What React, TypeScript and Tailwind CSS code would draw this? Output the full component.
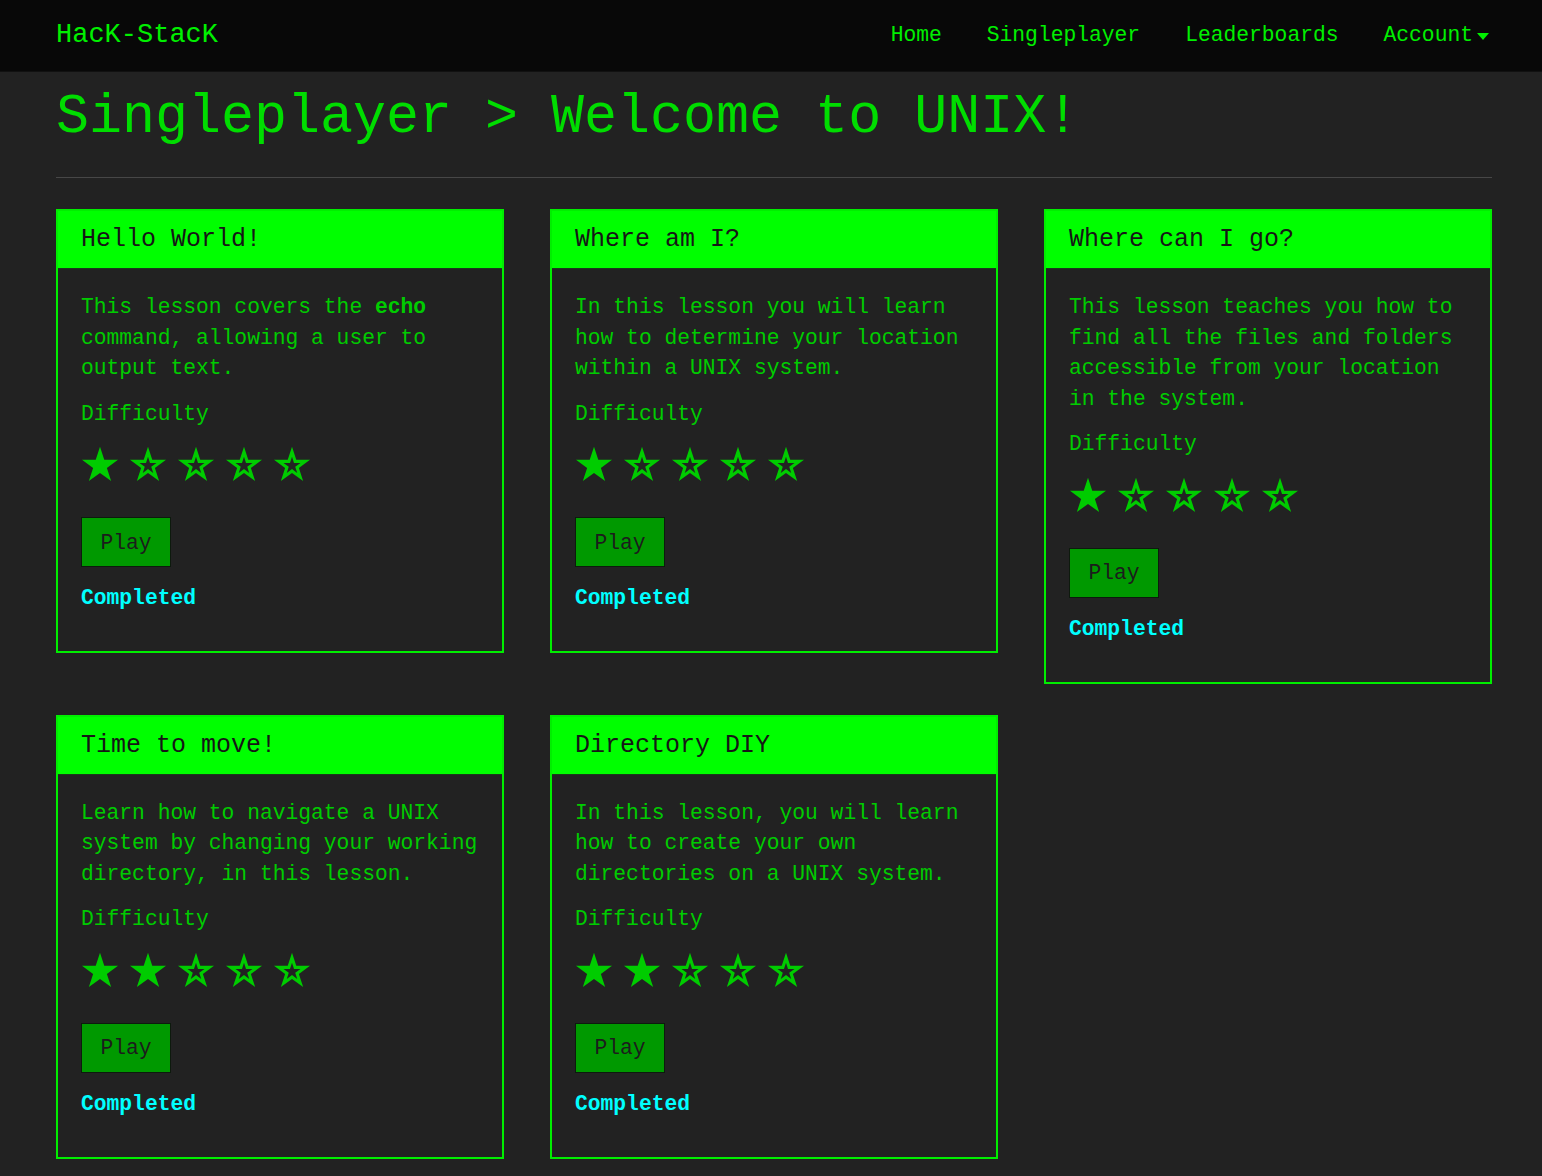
import type { ReactNode } from 'react'

type Lesson = {
  title: string
  body: ReactNode
  difficulty: number
}

const LESSONS: Lesson[] = [
  {
    title: 'Hello World!',
    body: (
      <>
        This lesson covers the <b>echo</b> command, allowing a user to output text.
      </>
    ),
    difficulty: 1
  },
  {
    title: 'Where am I?',
    body: 'In this lesson you will learn how to determine your location within a UNIX system.',
    difficulty: 1
  },
  {
    title: 'Where can I go?',
    body: 'This lesson teaches you how to find all the files and folders accessible from your location in the system.',
    difficulty: 1
  },
  {
    title: 'Time to move!',
    body: 'Learn how to navigate a UNIX system by changing your working directory, in this lesson.',
    difficulty: 2
  },
  {
    title: 'Directory DIY',
    body: 'In this lesson, you will learn how to create your own directories on a UNIX system.',
    difficulty: 2
  }
]

const OUTER = '50,2 61.23,36.55 97.55,36.55 68.17,57.9 79.39,92.45 50,71.1 20.61,92.45 31.83,57.9 2.45,36.55 38.77,36.55'
const INNER = '50,28.5 55.28,44.73 72.35,44.74 58.54,54.77 63.81,71.01 50,60.98 36.19,71.01 41.46,54.77 27.65,44.74 44.72,44.73'

function Star({ filled }: { filled: boolean }) {
  return (
    <svg width="38" height="36" viewBox="0 0 100 95" className="shrink-0">
      {filled ? (
        <polygon points={OUTER} fill="#00cc00" />
      ) : (
        <path d={`M${OUTER.replace(/ /g, ' L')}Z M${INNER.replace(/ /g, ' L')}Z`} fill="#00cc00" fillRule="evenodd" />
      )}
    </svg>
  )
}

function LessonCard({ lesson }: { lesson: Lesson }) {
  return (
    <div className="border-2 border-[#00ee00] bg-[#222]">
      <div className="bg-[#00ff00] px-[23px] pt-[14px] pb-[13px] border-b border-[#1a3a1a] text-[25px] leading-[30px] text-[#161616]">
        {lesson.title}
      </div>
      <div className="px-[23px] pt-[23px] pb-[38px] text-[21.3px] leading-[30.5px] text-[#00cc00]">
        <p>{lesson.body}</p>
        <p className="mt-[15px]">Difficulty</p>
        <div className="mt-[17px] flex gap-[10px]">
          {[1, 2, 3, 4, 5].map(i => (
            <Star key={i} filled={i <= lesson.difficulty} />
          ))}
        </div>
        <button className="mt-[35px] block w-[90px] h-[50px] pt-[3px] bg-[#009900] border border-[#0d1a0d] text-[#1c1c1c] text-[21.3px] leading-none">
          Play
        </button>
        <p className="mt-[16px] leading-[30px] font-bold text-[#00ffff]">Completed</p>
      </div>
    </div>
  )
}

export default function App() {
  return (
    <div className="min-h-screen bg-[#222] font-['Liberation_Mono','Courier_New',monospace]">

      {/* Navbar */}
      <nav className="h-[72px] bg-[#080808] border-b border-[#111] pl-[56px] pr-[50px] flex items-center">
        <span className="text-[27px] leading-none text-[#00f000]">HacK-StacK</span>
        <ul className="ml-auto flex items-center gap-[45px] pr-[3px] text-[21.3px] leading-none text-[#00f000]">
          <li>Home</li>
          <li>Singleplayer</li>
          <li>Leaderboards</li>
          <li className="flex items-center">
            Account
            <span className="ml-[4px] mt-[2px] w-0 h-0 border-t-[7px] border-t-[#00f000] border-x-[6px] border-x-transparent" />
          </li>
        </ul>
      </nav>

      <main className="pl-[56px] pr-[50px] pb-[20px]">
        <h1 className="mt-[13px] text-[55px] leading-[66px] text-[#00dd00]">
          Singleplayer &gt; Welcome to UNIX!
        </h1>
        <hr className="mt-[26px] border-0 border-t border-[#474747]" />

        <div className="mt-[31px] grid grid-cols-3 gap-x-[46px] gap-y-[31px] items-start">
          {LESSONS.map(l => (
            <LessonCard key={l.title} lesson={l} />
          ))}
        </div>
      </main>
    </div>
  )
}
